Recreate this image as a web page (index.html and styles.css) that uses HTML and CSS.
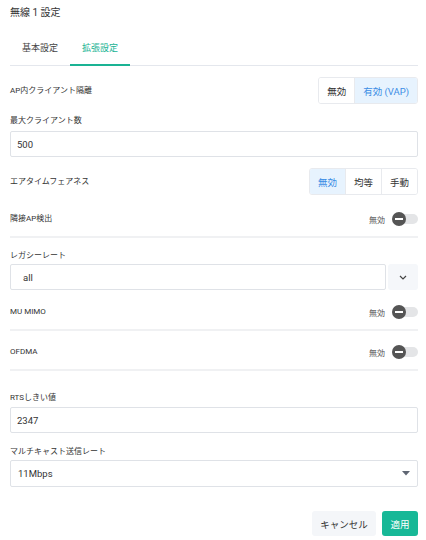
FILE: index.html
```html
<!DOCTYPE html>
<html lang="ja">
<head>
<meta charset="utf-8">
<link rel="stylesheet" href="styles.css">
</head>
<body>
<div class="page">
  <div class="title">無線 1 設定</div>
  <div class="tabs">
    <div class="tab">基本設定</div>
    <div class="tab active">拡張設定</div>
  </div>

  <div class="seg-row first">
    <div class="label">AP内クライアント隔離</div>
    <div class="seg">
      <div class="seg-btn">無効</div>
      <div class="seg-btn on">有効 (VAP)</div>
    </div>
  </div>

  <div class="field f-max">
    <div class="label">最大クライアント数</div>
    <div class="input">500</div>
  </div>

  <div class="seg-row second">
    <div class="label">エアタイムフェアネス</div>
    <div class="seg">
      <div class="seg-btn on">無効</div>
      <div class="seg-btn">均等</div>
      <div class="seg-btn">手動</div>
    </div>
  </div>

  <div class="toggle-row t1">
    <div class="label">隣接AP検出</div>
    <div class="toggle-wrap"><span class="state">無効</span><span class="switch"><span class="knob"></span></span></div>
  </div>

  <div class="field f-legacy">
    <div class="label">レガシーレート</div>
    <div class="combo">
      <div class="input legacy">all</div>
      <div class="combo-btn">
        <svg width="8" height="5" viewBox="0 0 8 5"><path d="M1 1 L4 4 L7 1" fill="none" stroke="#444" stroke-width="1.2"/></svg>
      </div>
    </div>
  </div>

  <div class="toggle-row t2">
    <div class="label">MU MIMO</div>
    <div class="toggle-wrap"><span class="state">無効</span><span class="switch"><span class="knob"></span></span></div>
  </div>

  <div class="toggle-row t3">
    <div class="label">OFDMA</div>
    <div class="toggle-wrap"><span class="state">無効</span><span class="switch"><span class="knob"></span></span></div>
  </div>

  <div class="field f-rts">
    <div class="label">RTSしきい値</div>
    <div class="input">2347</div>
  </div>

  <div class="field f-multi">
    <div class="label">マルチキャスト送信レート</div>
    <div class="input select">
      <span>11Mbps</span>
      <svg width="8" height="5" viewBox="0 0 8 5"><path d="M0 0 L8 0 L4 4.5 Z" fill="#5f6673"/></svg>
    </div>
  </div>

  <div class="actions">
    <div class="btn cancel">キャンセル</div>
    <div class="btn apply">適用</div>
  </div>
</div>
</body>
</html>
```

FILE: styles.css
```css
* { box-sizing: border-box; }
html, body { margin: 0; padding: 0; background: #fff; }
body {
  font-family: Roboto, "Noto Sans CJK JP", sans-serif;
  color: #333;
}
.page {
  width: 426px;
  padding: 0 8px 0 10px;
}
.title {
  height: 26px;
  line-height: 26px;
  font-size: 10px;
  color: #333;
}
.tabs {
  margin-top: 4px;
  display: flex;
  border-bottom: 1px solid #e4e7ed;
}
.tab {
  height: 36px;
  line-height: 36px;
  padding: 0 12px;
  font-size: 9px;
  color: #444;
  margin-bottom: -1px;
  border-bottom: 2px solid transparent;
}
.tab.active {
  color: #1ab394;
  border-bottom-color: #1ab394;
}
.label {
  font-size: 8px;
  line-height: 12px;
  color: #333;
}
.seg-row {
  display: flex;
  justify-content: space-between;
  align-items: center;
  height: 27px;
}
.seg-row.first { margin-top: 11px; }
.seg-row.second { margin-top: 11px; }
.seg {
  display: flex;
  height: 27px;
  border: 1px solid #e8eaee;
  border-radius: 3px;
  overflow: hidden;
}
.seg-btn {
  display: flex;
  align-items: center;
  padding: 0 8px;
  font-size: 9.5px;
  color: #333;
  background: #fff;
  border-left: 1px solid #e8eaee;
}
.seg-btn:first-child { border-left: none; }
.seg-btn.on {
  background: #e7f3fe;
  color: #3b8de5;
}
.field .label { margin-bottom: 4px; }
.f-max { margin-top: 11px; }
.f-legacy { margin-top: 12px; }
.f-legacy .label { margin-bottom: 2px; }
.f-rts { margin-top: 21px; }
.f-rts .label { margin-bottom: 3px; }
.f-multi { margin-top: 13px; }
.f-multi .label { margin-bottom: 2px; }
.input {
  height: 26px;
  border: 1px solid #dfe2e7;
  border-radius: 2px;
  padding: 0 6px;
  display: flex;
  align-items: center;
  font-size: 9.5px;
  color: #333;
}
.input.legacy { flex: 1; padding-left: 12px; }
.input.select {
  height: 27px;
  justify-content: space-between;
  padding: 0 7px 0 7px;
}
.combo { display: flex; gap: 2px; }
.combo-btn {
  width: 30px;
  height: 26px;
  background: #f5f7fa;
  border-radius: 3px;
  display: flex;
  align-items: center;
  justify-content: center;
}
.toggle-row {
  display: flex;
  justify-content: space-between;
  align-items: center;
  height: 36px;
  border-bottom: 2px solid #f0f1f3;
}
.toggle-row.t1 { margin-top: 7px; }
.toggle-row.t2 { margin-top: 5px; }
.toggle-row.t3 { margin-top: 4px; }
.toggle-wrap { display: flex; align-items: center; gap: 7px; }
.state { font-size: 8px; color: #555; }
.switch {
  position: relative;
  width: 26px;
  height: 10px;
  border-radius: 5px;
  background: #e4e5e7;
}
.knob {
  position: absolute;
  left: 0;
  top: -2px;
  width: 14px;
  height: 14px;
  border-radius: 50%;
  background: #555;
}
.knob::after {
  content: "";
  position: absolute;
  left: 3px;
  right: 3px;
  top: 6px;
  height: 2px;
  background: #fff;
}
.actions {
  margin-top: 24px;
  display: flex;
  justify-content: flex-end;
  gap: 6px;
}
.btn {
  height: 25px;
  border-radius: 3px;
  display: flex;
  align-items: center;
  justify-content: center;
  font-size: 9.5px;
}
.btn.cancel {
  width: 64px;
  background: #f4f6f9;
  color: #333;
}
.btn.apply {
  width: 36px;
  background: #17b897;
  color: #fff;
}
```
